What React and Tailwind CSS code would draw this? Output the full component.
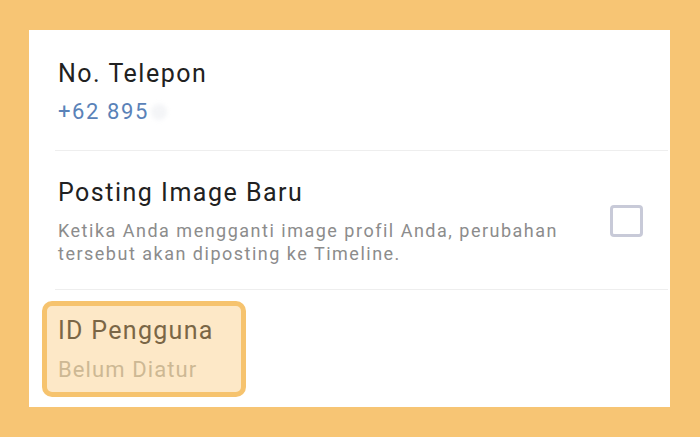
export default function App() {
  return (
    <div className="w-[700px] h-[437px] bg-[#f7c574] pt-[30px] pl-[29px] font-['Roboto',sans-serif]">
      <div className="w-[641px] h-[377px] bg-white flex flex-col">
        {/* phone number */}
        <div className="pl-[29px] pt-[29px] h-[120px]">
          <div className="text-[25px] leading-[30px] tracking-[1.5px] text-[#212121]">No. Telepon</div>
          <div className="mt-[10px] flex items-center text-[22px] leading-[26px] tracking-[1.6px] text-[#5a82b8]">
            <span>+62 895</span>
            <span className="ml-[2px] w-[16px] h-[16px] rounded-full bg-[#f4f5f7] blur-[2px]" />
          </div>
        </div>
        <div className="ml-[26px] mr-[2px] h-px bg-[#eeeeee]" />

        {/* post new image */}
        <div className="pl-[29px] pt-[27px] h-[138px] flex">
          <div className="w-[520px]">
            <div className="text-[25px] leading-[30px] tracking-[1.5px] text-[#212121]">Posting Image Baru</div>
            <div className="mt-[11px] text-[18px] leading-[23px] tracking-[1.5px] text-[#8c8c8c]">
              Ketika Anda mengganti image profil Anda, perubahan tersebut akan diposting ke Timeline.
            </div>
          </div>
          <div className="ml-[32px] mt-[27px] w-[33px] h-[32px] rounded-[4px] border-[3px] border-[#c8cad8]" />
        </div>
        <div className="ml-[26px] mr-[2px] h-px bg-[#eeeeee]" />

        {/* user id, highlighted */}
        <div className="ml-[13px] mt-[11px] w-[204px] h-[96px] rounded-[10px] border-[5px] border-[#f6c36e] bg-[#fde8c7] pl-[11px] pt-[10px]">
          <div className="text-[25px] leading-[30px] tracking-[1.3px] text-[#7a6646]">ID Pengguna</div>
          <div className="mt-[11px] text-[22px] leading-[26px] tracking-[1.1px] text-[#cdb894]">Belum Diatur</div>
        </div>
      </div>
    </div>
  );
}
